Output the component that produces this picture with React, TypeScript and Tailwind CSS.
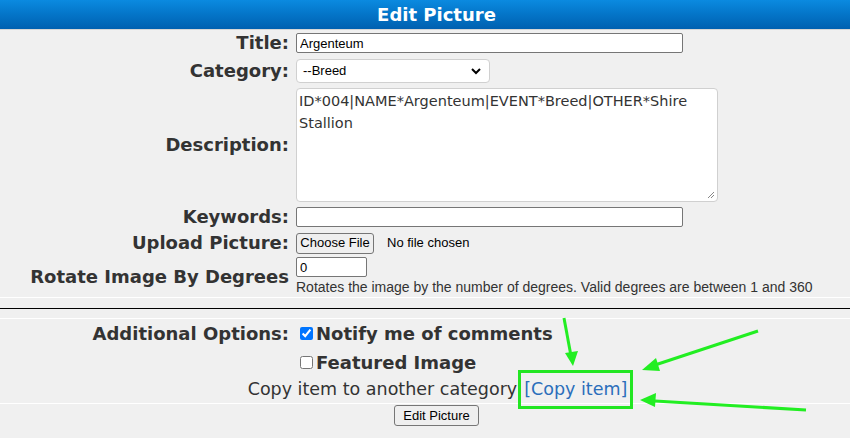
import React from "react";

const label = "text-right font-bold text-[18px] text-[#333] leading-none pr-[7px]";
const arial = "font-['Liberation_Sans',Arial,sans-serif] text-[13px] text-black";

export default function App() {
  return (
    <div className="relative w-[850px] h-[438px] overflow-hidden bg-[#f0f0f0] font-['DejaVu_Sans',Verdana,sans-serif]">
      <div className="w-[873px]">
        <div className="h-[30px] bg-gradient-to-b from-[#0b8ae0] to-[#0060b0] text-center text-white font-bold text-[18px] leading-[30px] border-b border-[#d6d6d6]">
          Edit Picture
        </div>

        <div className="grid grid-cols-[296px_1fr]">
          {/* Title */}
          <div className={`${label} h-[26px] flex items-center justify-end`}>Title:</div>
          <div className="h-[26px] flex items-center">
            <input
              defaultValue="Argenteum"
              className={`${arial} w-[387px] h-[20px] bg-white border border-[#767676] rounded-[2px] px-[3px]`}
            />
          </div>

          {/* Category */}
          <div className={`${label} h-[30px] flex items-center justify-end`}>Category:</div>
          <div className="h-[30px] flex items-center">
            <div className={`${arial} w-[194px] h-[24px] bg-white border border-[#d0d0d0] rounded-[4px] flex items-center justify-between pl-[6px] pr-[8px]`}>
              <span>--Breed</span>
              <svg width="10" height="7" viewBox="0 0 10 7">
                <path d="M1 1l4 4 4-4" fill="none" stroke="#000" strokeWidth="2" />
              </svg>
            </div>
          </div>

          {/* Description */}
          <div className={`${label} h-[118px] flex items-center justify-end`}>Description:</div>
          <div className="h-[118px] flex items-center">
            <div className="relative w-[422px] h-[114px] bg-white border border-[#d0d0d0] rounded-[4px] px-[2px] pt-[1px] text-[14.5px] leading-[22px] text-[#333]">
              ID*004|NAME*Argenteum|EVENT*Breed|OTHER*Shire Stallion
              <svg className="absolute right-[2px] bottom-[2px]" width="9" height="9" viewBox="0 0 9 9">
                <path d="M8 2L2 8M8 5L5 8" stroke="#888" strokeWidth="1" />
              </svg>
            </div>
          </div>

          {/* Keywords */}
          <div className={`${label} h-[26px] flex items-center justify-end`}>Keywords:</div>
          <div className="h-[26px] flex items-center">
            <input className={`${arial} w-[387px] h-[20px] bg-white border border-[#767676] rounded-[2px] px-[3px]`} />
          </div>

          {/* Upload */}
          <div className={`${label} h-[26px] flex items-center justify-end`}>Upload Picture:</div>
          <div className={`${arial} h-[26px] flex items-center gap-[13px]`}>
            <span className="h-[21px] w-[78px] justify-center flex items-center bg-[#efefef] border border-[#767676] rounded-[3px]">
              Choose File
            </span>
            <span>No file chosen</span>
          </div>

          {/* Rotate */}
          <div className={`${label} h-[42px] flex items-center justify-end border-b border-white`}>
            Rotate Image By Degrees
          </div>
          <div className={`${arial} h-[42px] flex flex-col justify-start pt-[1px] border-b border-white`}>
            <input
              defaultValue="0"
              className={`${arial} w-[71px] h-[20px] bg-white border border-[#767676] rounded-[2px] px-[3px]`}
            />
            <span className="text-[14px] text-[#333] mt-[2px] leading-[16px] whitespace-nowrap">
              Rotates the image by the number of degrees. Valid degrees are between 1 and 360
            </span>
          </div>
        </div>

        <div className="h-[10px]" />
        <div className="h-px bg-black" />
        <div className="h-[10px] border-b border-white" />

        <div className="grid grid-cols-[296px_1fr]">
          <div className={`${label} h-[29px] flex items-center justify-end`}>Additional Options:</div>
          <div className="h-[29px] flex items-center">
            <input type="checkbox" defaultChecked className="w-[13px] h-[13px] ml-[4px] mr-[3px] accent-[#0075ff]" />
            <span className="font-bold text-[18px] text-[#333]">Notify me of comments</span>
          </div>

          <div className="h-[28px]" />
          <div className="h-[28px] flex items-center">
            <input type="checkbox" className="w-[13px] h-[13px] ml-[4px] mr-[3px]" />
            <span className="font-bold text-[18px] text-[#333]">Featured Image</span>
          </div>
        </div>

        <div className="h-[28px] flex items-center justify-center pl-[8px] border-b border-white text-[17.5px] text-[#333] gap-[1px]">
          <span>Copy item to another category</span>
          <span className="border-[3px] border-[#22e622] px-[3px] h-[39px] flex items-center">
            <a className="text-[#2a6ebb]">[Copy item]</a>
          </span>
        </div>

        <div className="flex justify-center pt-[1px]">
          <button className={`${arial} h-[21px] px-[8px] bg-[#efefef] border border-[#767676] rounded-[3px]`}>
            Edit Picture
          </button>
        </div>
      </div>

      <svg className="absolute inset-0 pointer-events-none" width="850" height="438">
        <g stroke="#22ee22" strokeWidth="3" fill="#22ee22">
          <line x1="564" y1="318" x2="571" y2="356" />
          <polygon points="565,353 578,351 573,366" stroke="none" />
          <line x1="758" y1="331" x2="655" y2="365" />
          <polygon points="642,370 656,358 660,371" stroke="none" />
          <line x1="806" y1="410" x2="655" y2="401" />
          <polygon points="640,400 656,393 655,407" stroke="none" />
        </g>
      </svg>
    </div>
  );
}
